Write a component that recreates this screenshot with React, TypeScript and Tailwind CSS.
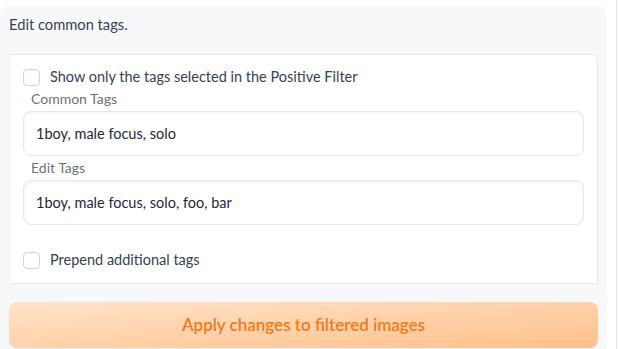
import { FC } from "react";

// ── Checkbox row ──────────────────────────────────────────────────────────────

const CheckRow: FC<{ label: string }> = ({ label }) => (
  <label className="flex items-center gap-[10px] h-[18px]">
    <span className="w-[17px] h-[17px] shrink-0 rounded-[4px] border border-[#d1d5db] bg-white shadow-[inset_0_1px_2px_rgba(0,0,0,0.05)]" />
    <span className="text-[14.5px] text-[#374151]">{label}</span>
  </label>
);

// ── Text field ────────────────────────────────────────────────────────────────

const TagField: FC<{ label: string; value: string }> = ({ label, value }) => (
  <div className="flex flex-col">
    <span className="pl-[8px] h-[22px] leading-[20px] text-[14px] text-[#6b7280]">{label}</span>
    <div className="h-[45px] flex items-center px-[12px] rounded-[8px] border border-[#e5e7eb] bg-white shadow-[inset_0_1px_3px_rgba(0,0,0,0.06)] text-[14.5px] text-[#1f2937]">
      {value}
    </div>
  </div>
);

export default function App() {
  return (
    <div className="w-[618px] h-[349px] bg-white flex font-['Lato','Liberation_Sans',sans-serif] overflow-hidden">
      <div className="w-[607px] mt-[6px] h-[360px] rounded-[10px] bg-[#f7f8fa] flex flex-col pl-[9px] pr-[9px]">
        <div className="h-[48px] pt-[8px] text-[14.7px] text-[#374151] leading-[20px]">Edit common tags.</div>

        {/* Options block */}
        <div className="h-[230px] bg-white border border-l-[#f0f1f3] border-[#e5e7eb] rounded-tr-[6px] flex flex-col px-[13px] pt-[13px]">
          <CheckRow label="Show only the tags selected in the Positive Filter" />
          <div className="mt-[3px] flex flex-col gap-[2px]">
            <TagField label="Common Tags" value="1boy, male focus, solo" />
            <TagField label="Edit Tags" value="1boy, male focus, solo, foo, bar" />
          </div>
          <div className="mt-[26px]">
            <CheckRow label="Prepend additional tags" />
          </div>
        </div>

        <button
          type="button"
          className="mt-[18px] h-[46px] rounded-[8px] bg-gradient-to-br from-[#ffe3c9] to-[#fec08b] text-[17px] font-semibold text-[#f27a1a] shadow-[0_1px_2px_rgba(0,0,0,0.05)]"
        >
          Apply changes to filtered images
        </button>
      </div>
      <div className="ml-[9px] w-px h-full bg-[#e5e7eb]" />
    </div>
  );
}
